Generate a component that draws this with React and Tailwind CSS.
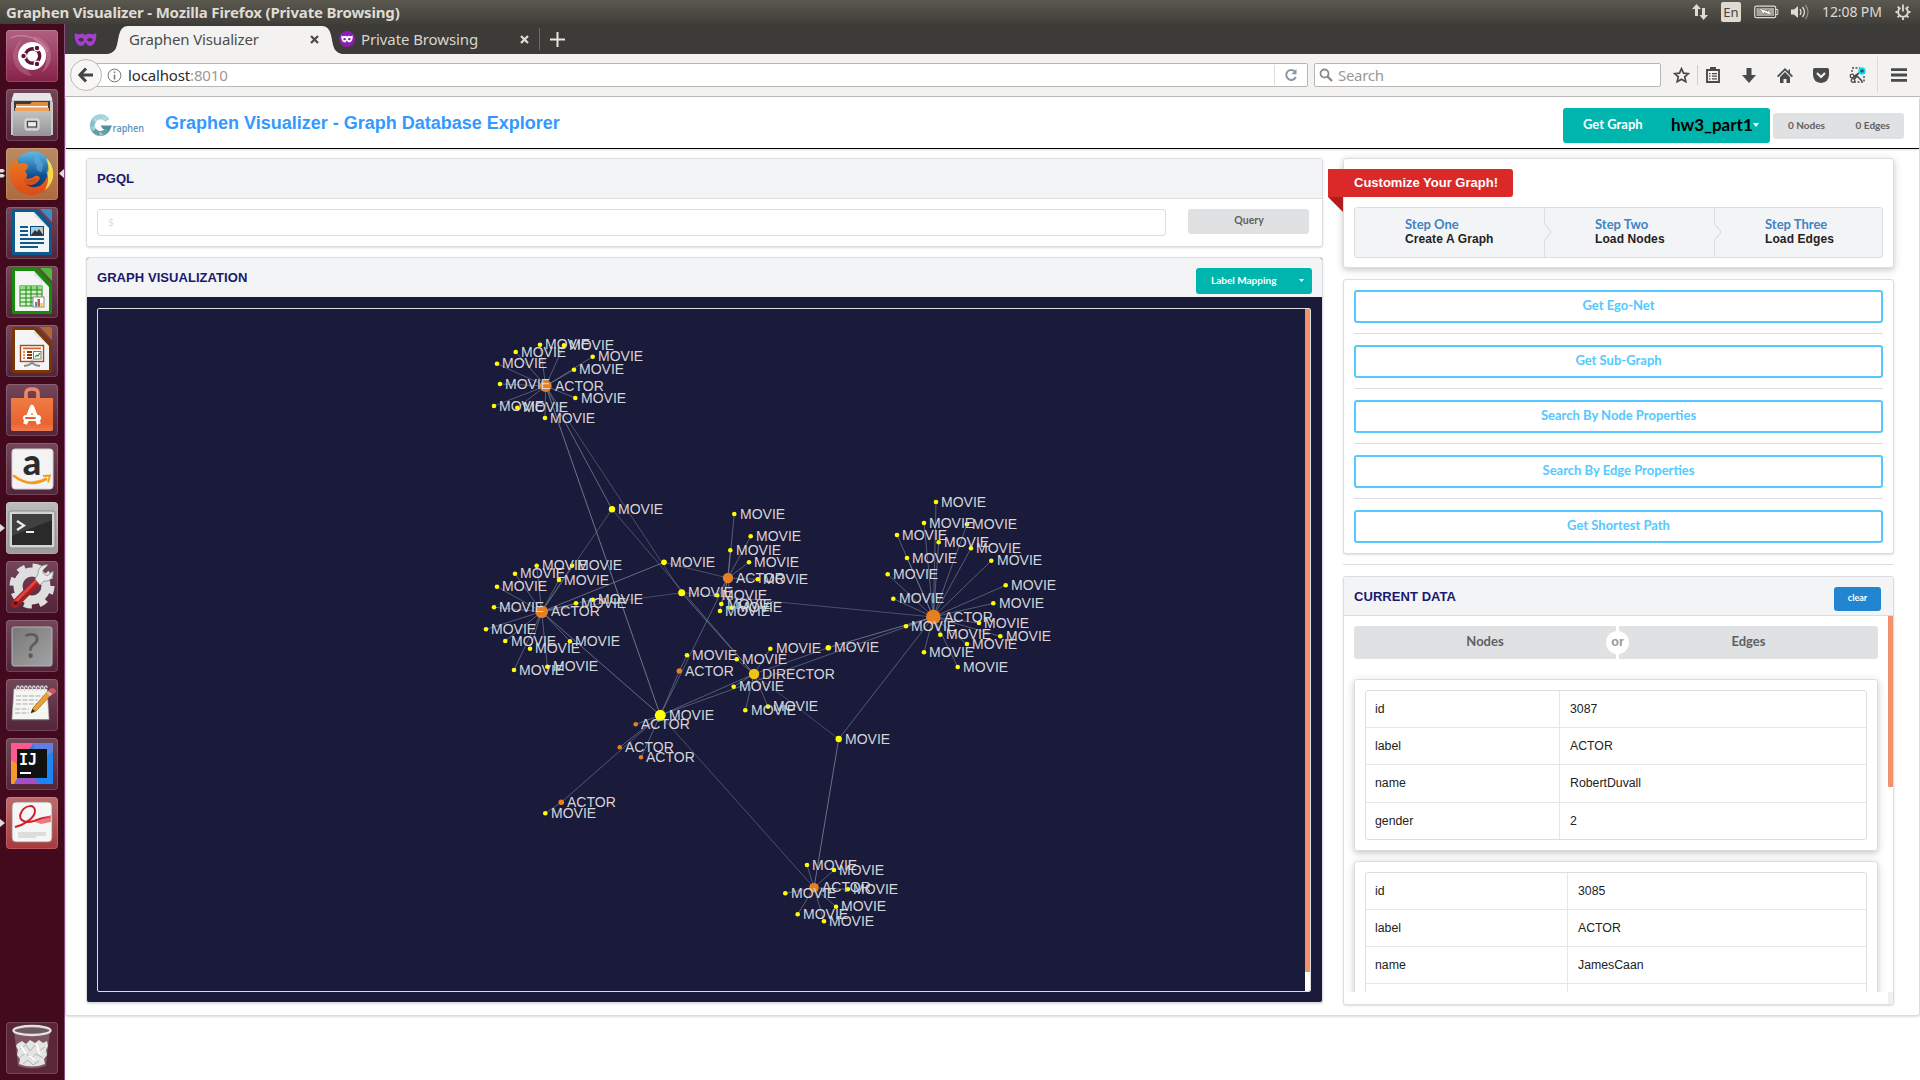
import React from "react";

const UI = "font-['Noto_Sans',sans-serif]";
const HELV = "font-['Liberation_Sans',Arial,sans-serif]";
const LATO = "font-['Lato',sans-serif]";

/* ---------- graph data: [x, y, radius, type] ---------- */
const hubs = {
  a1: [545.7, 386, 6, "ACTOR"],
  a2: [541.7, 611.7, 6.3, "ACTOR"],
  a3: [728, 578, 5.2, "ACTOR"],
  a4: [679.3, 671, 2.8, "ACTOR"],
  a5: [933.3, 617, 7.3, "ACTOR"],
  a6: [814, 887.7, 4.8, "ACTOR"],
  a7: [561.3, 802.3, 2.8, "ACTOR"],
  d: [754, 674, 5.2, "DIRECTOR"],
  m1: [612, 509.3, 3.2, "MOVIE"],
  m2: [664, 562.3, 2.8, "MOVIE"],
  m3: [681.7, 592.7, 3.5, "MOVIE"],
  m5: [828.3, 647.7, 2.8, "MOVIE"],
  m6: [838.7, 739, 3.2, "MOVIE"],
  m7: [660.3, 715.3, 5.5, "MOVIE"],
};

const leaves = {
  a1: [[540, 344.7], [564, 345.3], [515.7, 352], [497, 363.7], [500, 384], [494, 406], [517.3, 407.7], [545, 418], [575.3, 398], [574, 369.7], [592.7, 356.7]],
  a2: [[536.7, 565.7], [572, 565.7], [515, 573.7], [497, 586.7], [559, 580], [494, 607.3], [576, 603.3], [592.7, 599.7], [486, 629.3], [505.3, 641], [530, 648.7], [570, 641.3], [514, 670], [547.3, 666.7]],
  a3: [[734.3, 514], [750.7, 536.3], [730.3, 550.3], [749, 562.3], [757.7, 579.3], [717, 595.3], [721.3, 604], [731.3, 607.7], [720, 611]],
  a4: [[687, 655.3]],
  a5: [[936, 502], [924, 523], [967, 524.3], [897, 535], [938.7, 542.3], [971, 548.3], [907, 558], [991.3, 560.7], [887.7, 574.3], [1005.7, 585.3], [893.3, 598.7], [993.3, 603.3], [906, 626.3], [979, 623], [940.3, 634.7], [1000.3, 636.3], [967, 644], [924, 652.3], [957.7, 667]],
  a6: [[807, 865], [834, 870], [785.3, 893.3], [848, 889.3], [836, 906.7], [797.7, 914.3], [824, 921.3]],
  a7: [[545.3, 813.3]],
  d: [[736.7, 659.3], [770.3, 648.7], [733.7, 686.7], [745.3, 710.3], [768, 706.6]],
  m7: [[635.7, 724.3], [619.7, 747.3], [641, 757.3]],
};

const links = [
  ["a1", "m1", 0.75], ["a1", "m3", 0.5], ["a1", "m7", 0.85], ["m1", "a2", 0.5], ["m1", "d", 0.5],
  ["a2", "m2", 0.75], ["m2", "a3", 0.5], ["a2", "m3", 0.45], ["m3", "a5", 0.5], ["m3", "d", 0.75],
  ["a3", "m7", 0.6], ["a4", "m7", 0.6], ["d", "m7", 0.6], ["a5", "m7", 0.6], ["d", "m5", 0.6],
  ["m5", "a5", 0.8], ["d", "m6", 0.45], ["m6", "a5", 0.6], ["m6", "a6", 0.8], ["a2", "m7", 0.75],
  ["m7", "a6", 0.5], ["m7", "a7", 0.6],
];

const fills = { ACTOR: "#e67e22", DIRECTOR: "#f1c40f", MOVIE: "#ffff00" };

function GraphCanvas() {
  const nodes = Object.values(hubs).slice();
  const edges = links.map(([a, b, o]) => [hubs[a], hubs[b], o]);
  Object.entries(leaves).forEach(([hub, list]) => {
    list.forEach(([x, y]) => {
      const n = [x, y, 2.3, hub === "m7" ? "ACTOR" : "MOVIE"];
      nodes.push(n);
      edges.push([hubs[hub], n, 0.62]);
    });
  });
  return (
    <svg className="block h-full flex-1" viewBox="98 309 1207 683" preserveAspectRatio="xMinYMin slice">
      {edges.map(([a, b, o], i) => (
        <line key={i} x1={a[0]} y1={a[1]} x2={b[0]} y2={b[1]} stroke="#8494a3" strokeOpacity={o} strokeWidth="0.9" />
      ))}
      {nodes.map(([x, y, r, t], i) => (
        <circle key={i} cx={x} cy={y} r={r} fill={fills[t]} />
      ))}
      {nodes.map(([x, y, r, t], i) => (
        <text key={i} x={Math.round(x + r + 3)} y={Math.round(y + 4.7)} fontSize="14" fontFamily="Liberation Sans, Arial, sans-serif" fill="#d6d6da">
          {t}
        </text>
      ))}
    </svg>
  );
}

/* ---------- launcher ---------- */
const docIcon = (dark, light, body) => (
  <>
    <path d="M8 2h23l15 16v28q0 2-2 2H8q-2 0-2-2V4q0-2 2-2z" fill={dark} />
    <path d="M34 2h10q2 0 2 2v11z" fill={light} />
    <path d="M9 5h19l15 16v24H9z" fill="#f4f4f4" />
    <path d="M28 5l15 16-15-12z" fill="#cfcfcf" opacity=".5" />
    {body}
  </>
);

const icons = {
  dash: (
    <>
      <path d="M26 6a20 20 0 0 1 19 20c0 8-5 14-10 17 6-8 6-14 5-18" fill="#c77d99" opacity=".55" />
      <path d="M26 46A20 20 0 0 1 7 26C7 18 12 12 17 9c-6 8-6 14-5 18" fill="#c77d99" opacity=".4" />
      <path d="M4 8c14-6 30 0 38 14" stroke="#d795ad" strokeWidth="1.2" fill="none" opacity=".7" />
      <circle cx="26" cy="26" r="14" fill="#fff" />
      <circle cx="26.500" cy="26" r="7.200" fill="none" stroke="#5e1434" strokeWidth="3.400" />
      <g stroke="#fff" strokeWidth="1.200" fill="#5e1434">
        <circle cx="17.500" cy="26" r="2.800" /><circle cx="31" cy="18" r="2.800" /><circle cx="31" cy="34" r="2.800" />
      </g>
    </>
  ),
  files: (
    <>
      <path d="M8 4h36l3 10v32H5V14z" fill="#c9c9c9" />
      <path d="M8 4h36l2.500 7h-41z" fill="#e6e6e6" />
      <path d="M8 12h36v12H8z" fill="#3c3c3c" />
      <path d="M10 15h14l2-2h16v10H10z" fill="#e58a3e" />
      <path d="M10 17h32v1.500H10z" fill="#fff" />
      <path d="M9 19h34v5H9z" fill="#f0a057" />
      <path d="M7 22h38v25H7z" fill="url(#steel)" />
      <rect x="19" y="30" width="14" height="11" rx="2" fill="#c8c8c8" stroke="#e2e2e2" />
      <rect x="21.500" y="32.500" width="9" height="5.500" fill="#eee" stroke="#444" strokeWidth="1.200" />
    </>
  ),
  firefox: (
    <>
      <circle cx="27" cy="24" r="20.500" fill="url(#globe)" />
      <path d="M30 8c5 2 4 6 8 8-3 3 0 6-3 8-4-1-6-4-4-7-3-2-4-5-1-9z" fill="#67b5e3" opacity=".5" />
      <path d="M43 14c4 5 6 12 3 19-4 9-12 14-20 14C14 47 5 38 4 27c-.5-6 1-11 3-15l1 4 2-7 3 7c5-2 9-1 9 3 0 2-3 3-3 5 2 1 3 4 1 6 2 2 6 0 9-2 4-1 6 2 4 4-3 5-9 6-13 4 5 5 14 4 18-2 4-5 4-9 3-13l2 2c1-4 0-6 0-9z" fill="url(#fox)" />
      <path d="M40 10c7 5 9 15 6 23-2 4-4 7-7 9 4-8 4-14 1-19l2 2c1-5 0-10-2-15z" fill="#fbd84e" />
      <path d="M18 30c3 4 8 1 11 0 3 0 3 2 2 3-3 3-8 4-12 2z" fill="#c9471b" opacity=".55" />
    </>
  ),
  writer: docIcon("#0d5a8e", "#3b8fc4", (
    <>
      <g fill="#0d5a8e">
        <rect x="14" y="19" width="8" height="2" /><rect x="14" y="23" width="8" height="2" /><rect x="14" y="27" width="8" height="2" />
        <rect x="14" y="31" width="24" height="2" /><rect x="14" y="35" width="24" height="2" /><rect x="14" y="39" width="18" height="2" />
      </g>
      <rect x="24.500" y="19.500" width="13" height="9" fill="#9dccec" stroke="#0d4a75" />
      <path d="M25 28l4-5 2 2 2-3 4 6z" fill="#333" /><circle cx="35" cy="22" r="1.300" fill="#f6c644" />
    </>
  )),
  calc: docIcon("#1a8a0c", "#4dbb36", (
    <>
      <rect x="14" y="20" width="22" height="20" fill="#d5f0cf" stroke="#1a8a0c" />
      <rect x="14" y="20" width="22" height="4" fill="#8fdb83" />
      <path d="M14 24h22M14 28h22M14 32h22M14 36h22M20 20v20M25 20v20M31 20v20" stroke="#1a8a0c" fill="none" />
      <rect x="27" y="31" width="11" height="10" fill="#fff" stroke="#8a8a8a" />
      <rect x="29" y="36" width="2" height="4.500" fill="#3c8fd6" /><rect x="31.500" y="33" width="2.500" height="7.500" fill="#d9541e" /><rect x="34.500" y="37" width="2" height="3.500" fill="#f2c500" />
    </>
  )),
  impress: docIcon("#7a3607", "#b4662c", (
    <>
      <rect x="14.500" y="20.500" width="23" height="16" fill="#fff" stroke="#a8481a" strokeWidth="1.400" />
      <rect x="17" y="22.500" width="18" height="1.800" fill="#d9662a" />
      <path d="M17 27h2M17 30h2M17 33h2" stroke="#d9662a" strokeWidth="1.600" /><path d="M21 27h5M21 30h5M21 33h5" stroke="#8a3608" strokeWidth="1.800" />
      <rect x="27.500" y="26.500" width="7.500" height="7.500" fill="#fff" stroke="#777" /><path d="M29 32l2-2 1 1 2-3" stroke="#2e9a2e" fill="none" strokeWidth="1.200" />
      <path d="M18 41q7-1 8-4 1 3 8 4" stroke="#8b8b8b" strokeWidth="2" fill="none" />
    </>
  )),
  software: (
    <>
      <path d="M20 16V9q0-4 6-4t6 4v7" fill="none" stroke="#e98a66" strokeWidth="3.600" />
      <path d="M5 14h42v31q0 2-2 2H7q-2 0-2-2z" fill="url(#bag)" />
      <path d="M19 40l7-17 7 17" fill="none" stroke="#fff" strokeWidth="4.200" strokeLinejoin="round" />
      <rect x="17" y="31" width="18" height="6" rx="3" fill="#fff" /><rect x="19" y="33" width="11" height="2" rx="1" fill="#e9622c" />
    </>
  ),
  amazon: (
    <>
      <rect x="6" y="6" width="41" height="40" rx="3" fill="#f3f3f3" stroke="#d0d0d0" />
      <text x="26" y="32" textAnchor="middle" fontFamily="Lato, sans-serif" fontWeight="900" fontSize="36" fill="#2c2c2c">a</text>
      <path d="M8 33q16 12 32 3" stroke="#f79a1b" strokeWidth="2.800" fill="none" strokeLinecap="round" /><path d="M37 33l7-.5-2 7" fill="none" stroke="#f79a1b" strokeWidth="1.800" />
    </>
  ),
  terminal: (
    <>
      <rect x="3" y="9" width="46" height="37" rx="2" fill="#d4d4d4" stroke="#8b8b8b" />
      <rect x="6" y="12" width="40" height="31" fill="#2a2a2a" />
      <path d="M6 12h40v6L6 34z" fill="#4a4a4a" opacity=".7" />
      <path d="M11 19l7 4.500-7 4.500" stroke="#eee" strokeWidth="2.200" fill="none" /><path d="M20 30h8" stroke="#eee" strokeWidth="2" />
    </>
  ),
  settings: (
    <>
      <circle cx="26" cy="25" r="14" fill="none" stroke="#dedede" strokeWidth="9" />
      <circle cx="26" cy="25" r="20" fill="none" stroke="#dedede" strokeWidth="5" strokeDasharray="8 7.700" />
      <path d="M9 43L35 17" stroke="#a81d1d" strokeWidth="8" strokeLinecap="round" />
      <path d="M9 41L32 18" stroke="#dd4646" strokeWidth="3" strokeLinecap="round" />
      <path d="M29 18l5 6 4-4c6 1 10-4 9-10l-6 5-4-3 0-3 5-5c-6-1-10 3-10 9z" fill="#e8e8e8" stroke="#8c8c8c" strokeWidth=".8" />
      <circle cx="9.500" cy="42" r="2" fill="#5e0a0a" />
    </>
  ),
  help: (
    <>
      <rect x="6" y="7" width="40" height="39" rx="2" fill="url(#steel2)" stroke="#b5b5b5" />
      <text x="26" y="38" textAnchor="middle" fontFamily="Noto Sans, sans-serif" fontSize="34" fill="#5c5c5c">?</text>
    </>
  ),
  editor: (
    <>
      <path d="M8 10h33l2 31H6z" fill="#f5f5f2" stroke="#bbb" strokeWidth=".6" />
      <path d="M5 40h38v2H5z" fill="#333" opacity=".5" />
      {[11, 15, 19, 23, 27, 31, 35, 39].map((x) => <path key={x} d={`M${x} 12c-2-5 2-7 2-3`} stroke="#d8d8d8" strokeWidth="1.300" fill="none" />)}
      <path d="M10 17h27M10 21h22M10 25h25M9 30h14M9 34h14" stroke="#a9a9a9" strokeDasharray="5 1.500" />
      <path d="M25 34l2-5 15-17 4 3-16 17z" fill="#eba133" stroke="#8a5a17" strokeWidth=".7" />
      <path d="M25 34l1.500-4 2.500 2z" fill="#222" /><path d="M42 12l3-3q5 0 5 4l-4 3z" fill="#d5565c" />
      <path d="M40.500 14l1.500-2 4 3-1.500 2z" fill="#ccc" />
    </>
  ),
  idea: (
    <>
      <rect x="5" y="5" width="42" height="41" fill="#1a86f5" />
      <path d="M5 5h23L5 32z" fill="#fc5a8c" /><path d="M28 5h19v9L28 24z" fill="#5f7fe0" /><path d="M5 22l12 8-9 16H5z" fill="#f39a2e" /><path d="M9 46l10-16 15 16z" fill="#a250c4" />
      <rect x="11" y="11" width="30" height="29" fill="#111" />
      <text x="13" y="27" fontFamily="DejaVu Sans Mono, monospace" fontWeight="700" fontSize="15" fill="#fff">IJ</text>
      <rect x="14" y="34" width="11" height="2" fill="#fff" />
    </>
  ),
  reader: (
    <>
      <rect x="6" y="5" width="40" height="40" rx="4" fill="#f6f6f6" stroke="#888" strokeWidth=".8" />
      <path d="M9 30c9-2 20-9 20-16 0-7-9-6-13 0-5 8 1 13 12 10 6-2 10-4 16-4" fill="none" stroke="#d31f2c" strokeWidth="2" />
      <path d="M29 25l16-7v7l-10 2z" fill="#e0525a" opacity=".75" />
      <path d="M12 36h28M12 38h28M12 40h18" stroke="#b9b9b9" strokeWidth=".8" />
    </>
  ),
  trash: (
    <>
      <path d="M8 8h36l-4 36q-14 5-28 0z" fill="#fff" opacity=".22" />
      <path d="M11 22l5-3 4 3 4-4 5 3 4-3 4 3 4-2 1 5-2 4 1 5-3 4 1 5q-13 5-26 0l1-5-3-4 1-5-2-4z" fill="#e4e4e2" />
      <path d="M14 27l6-4 4 6 5-6 4 6 6-4M14 35l6-4 5 6 5-5 7 4M17 42l5-4 5 5 6-4" stroke="#b4b4b2" fill="none" />
      <path d="M15 24l5 8M30 22l4 10M23 34l6 4" stroke="#fff" strokeWidth="2" fill="none" />
      <ellipse cx="26" cy="8.500" rx="18.500" ry="4.500" fill="#6d5a62" stroke="#e2e2e2" strokeWidth="2.400" />
    </>
  ),
};

const PLAIN = "bg-gradient-to-b from-[#734659] to-[#54243a]";

const tiles = [
  ["dash", "bg-gradient-to-b from-[#b06082] to-[#862048]"],
  ["files", PLAIN],
  ["firefox", "bg-gradient-to-b from-[#bd8a63] to-[#ad6b3d]", "active"],
  ["writer", PLAIN],
  ["calc", PLAIN],
  ["impress", PLAIN],
  ["software", PLAIN],
  ["amazon", PLAIN],
  ["terminal", "bg-gradient-to-b from-[#bcbcbc] to-[#9a9a9a]", "run"],
  ["settings", PLAIN],
  ["help", PLAIN],
  ["editor", PLAIN],
  ["idea", PLAIN],
  ["reader", "bg-gradient-to-b from-[#c06a6a] to-[#a8383c]", "run"],
];

function Tile({ name, tone, state, className = "" }) {
  return (
    <div className={`relative h-[52px] w-[52px] shrink-0 rounded-[4px] shadow-[inset_0_0_0_1px_rgba(255,255,255,0.16)] ${tone} ${className}`}>
      <svg viewBox="0 0 52 52" className="block h-[52px] w-[52px]">{icons[name]}</svg>
      {state === "run" && <svg className="absolute -left-[6px] top-[22px]" width="5" height="8"><path d="M0 0l5 4-5 4z" fill="#ddd" /></svg>}
      {state === "active" && (
        <>
          <svg className="absolute -left-[6px] top-[21px]" width="5" height="9"><path d="M0 0h3l2 1.700-2 1.700H0zM0 5h3l2 1.700L3 8.400H0z" fill="#ddd" /></svg>
          <svg className="absolute left-[53px] top-[21px]" width="5" height="9"><path d="M5 0v9L0 4.500z" fill="#ddd" /></svg>
        </>
      )}
    </div>
  );
}

function Launcher() {
  return (
    <aside className="flex h-full w-[65px] shrink-0 flex-col gap-[7px] border-r border-[#8c4a80] bg-[#430a1e] pt-[6px] pb-[6px] pl-[6px]">
      <svg width="0" height="0" className="absolute">
        <defs>
          <linearGradient id="steel" x2="0" y2="1"><stop stopColor="#c2c2c2" /><stop offset="1" stopColor="#949494" /></linearGradient>
          <linearGradient id="steel2" x2="1" y2="1"><stop stopColor="#787878" /><stop offset="1" stopColor="#a3a3a3" /></linearGradient>
          <linearGradient id="globe" x2="0" y2="1"><stop stopColor="#5fbbe8" /><stop offset=".6" stopColor="#0e4d90" /><stop offset="1" stopColor="#0a2f66" /></linearGradient>
          <linearGradient id="fox" x2="0" y2="1"><stop stopColor="#ee7d22" /><stop offset="1" stopColor="#dd4a18" /></linearGradient>
          <linearGradient id="bag" x2="0" y2="1"><stop stopColor="#ef7b43" /><stop offset=".75" stopColor="#ea6430" /><stop offset="1" stopColor="#f07a50" /></linearGradient>
        </defs>
      </svg>
      {tiles.map(([n, t, s]) => <Tile key={n} name={n} tone={t} state={s} />)}
      <Tile name="trash" tone="bg-[#5a2638]" className="mt-auto" />
    </aside>
  );
}

/* ---------- desktop top bar ---------- */
function TopBar() {
  return (
    <div className={`flex h-6 shrink-0 items-center bg-gradient-to-b from-[#5b594f] to-[#3f3e39] text-[#dfdbd2] ${UI}`}>
      <span className="ml-[6px] w-[420px] whitespace-nowrap text-[15px] font-bold leading-6 tracking-[-0.17px]">Graphen Visualizer - Mozilla Firefox (Private Browsing)</span>
      <svg className="ml-auto" width="18" height="18" viewBox="0 0 18 18" fill="#dfdbd2"><path d="M5.500 1L10 6H7v7H4V6H1zM12.500 17L8.500 12H11V5h3v7h3z" /></svg>
      <span className="ml-[12px] h-5 w-5 rounded-[2px] bg-[#dfdbd2] text-center text-[13px] leading-5 text-[#45443f]">En</span>
      <svg className="ml-[13px]" width="25" height="14" viewBox="0 0 25 14"><rect x=".7" y="1.200" width="21" height="11.500" rx="1.500" fill="none" stroke="#dfdbd2" strokeWidth="1.200" /><rect x="2.500" y="3" width="17.500" height="8" fill="#a9a69d" /><path d="M22 4.500h1.800v5H22" fill="none" stroke="#dfdbd2" /><path d="M5 3l9 3.500V4l4 6.500-8-3V10z" fill="#fff" stroke="#55534c" strokeWidth=".5" /></svg>
      <svg className="ml-[11px]" width="20" height="16" viewBox="0 0 20 16" fill="none" stroke="#dfdbd2"><path d="M1 5.500h3L8 2v12l-4-3.500H1z" fill="#dfdbd2" stroke="none" /><path d="M10 5q2 3 0 6" strokeWidth="1.300" /><path d="M12.500 3q4 5 0 10" strokeWidth="1.300" /><path d="M15.500 1q5 7 0 14" opacity=".45" strokeWidth="1.300" /></svg>
      <span className="ml-[12px] w-[61px] whitespace-nowrap text-[14px] leading-6 tracking-[-0.1px]">12:08 PM</span>
      <svg className="ml-[12px] mr-[9px]" width="16" height="16" viewBox="0 0 16 16" fill="none" stroke="#dfdbd2"><path d="M5.500 3.800a4.900 4.900 0 1 0 5 0" strokeWidth="1.800" /><path d="M8 .5v7" strokeWidth="1.800" /><path d="M2.600 2.600l1.600 1.600M13.400 2.600l-1.600 1.600M.5 8h2M15.500 8h-2M2.600 13.400l1.600-1.600M13.400 13.400l-1.600-1.600M8 13.500V16" strokeWidth="1.900" /></svg>
    </div>
  );
}

const Mask = ({ w, h, fill, eye }) => (
  <svg width={w} height={h} viewBox="0 0 24 16"><path d="M.5 1Q4 3 7 2q3-1 5 1.500Q14 1 17 2q3 1 6.500-1 .5 7-2.500 11.500-2 2.500-5 2.300Q13.500 14.500 12 11q-1.500 3.500-4 3.800-3 .2-5-2.300Q0 8 .5 1z" fill={fill} /><path d="M4 8q4-4 6.500.5Q7 12.500 4 8zM20 8q-4-4-6.500.5Q17 12.500 20 8z" fill={eye} /></svg>
);

const Close = ({ color, className }) => (
  <svg width="9" height="9" viewBox="0 0 9 9" className={className}><path d="M1 1l7 7M8 1L1 8" stroke={color} strokeWidth="2.300" /></svg>
);

function TabStrip() {
  return (
    <div className={`flex h-[30px] shrink-0 items-center bg-[#3c3b37] text-[15px] ${UI}`}>
      <div className="ml-[9px] w-[34px]"><Mask w={23} h={15} fill="#a43fd0" eye="#3c3b37" /></div>
      <svg width="20" height="28" viewBox="0 0 20 28" className="mt-[2px] shrink-0"><path d="M0 28q7-1 9-9l2-10q2-9 9-9v28z" fill="#f3f2f0" /></svg>
      <div className="mt-[2px] flex h-7 w-[194px] items-center bg-[#f3f2f0] text-[#4c4c4c]">
        <span className="-mt-[2px] ml-[1px] w-[181px] whitespace-nowrap tracking-[-0.15px]">Graphen Visualizer</span>
        <Close color="#4c4c4c" className="-mt-[1px]" />
      </div>
      <svg width="20" height="28" viewBox="0 0 20 28" className="mt-[2px] shrink-0"><path d="M20 28q-7-1-9-9L9 9Q7 0 0 0v28z" fill="#f3f2f0" /></svg>
      <div className="-ml-[3px] flex h-4 w-4 items-center justify-center rounded-full bg-[#8c1fb0]"><Mask w={12} h={8} fill="#fff" eye="#8c1fb0" /></div>
      <span className="ml-[6px] w-[159px] whitespace-nowrap tracking-[-0.1px] text-[#d9d5cc]">Private Browsing</span>
      <Close color="#dfdbd2" />
      <div className="ml-[10px] h-[22px] w-px bg-[#6b6a66]" />
      <svg width="15" height="15" className="ml-[10px]"><path d="M7.500 0v15M0 7.500h15" stroke="#e9e6df" strokeWidth="2" /></svg>
    </div>
  );
}

function NavBar() {
  return (
    <div className={`flex h-[43px] shrink-0 items-center border-b border-[#bcbab7] bg-[#f3f2f0] text-[15px] ${UI}`}>
      <div className="z-10 ml-[5px] flex h-8 w-8 items-center justify-center rounded-full border border-[#bdbbb8] bg-[#f8f7f6]">
        <svg width="16" height="16" viewBox="0 0 16 16"><path d="M8 1.500L1.800 8 8 14.500M2.500 8H15" fill="none" stroke="#444" strokeWidth="3" /></svg>
      </div>
      <div className="-ml-[6px] flex h-6 w-[1212px] items-center rounded-r-[2px] border border-[#b9b7b4] bg-white">
        <svg width="15" height="15" viewBox="0 0 15 15" className="ml-[10px]" fill="none" stroke="#777"><circle cx="7.500" cy="7.500" r="6.400" /><path d="M7.500 6.500v5M7.500 3.500V5" strokeWidth="1.500" /></svg>
        <span className="ml-[6px] tracking-[-0.15px] text-[#2b2b2b]">localhost<span className="text-[#999]">:8010</span></span>
        <div className="ml-auto mr-[9px] h-5 w-px bg-[#ddd]" />
        <svg width="14" height="14" viewBox="0 0 14 14" className="mr-[9px]"><path d="M11 3.600A5 5 0 1 0 11.800 9" fill="none" stroke="#8b97a5" strokeWidth="2" /><path d="M12.500 1v5.200H7.300z" fill="#8b97a5" /></svg>
      </div>
      <div className="ml-[6px] flex h-6 w-[347px] items-center rounded-[2px] border border-[#b9b7b4] bg-white">
        <svg width="14" height="14" viewBox="0 0 14 14" className="ml-[4px]" fill="none" stroke="#8a8a8a"><circle cx="5.500" cy="5.500" r="4" strokeWidth="1.800" /><path d="M8.500 8.500L13 13" strokeWidth="2.400" /></svg>
        <span className="ml-[5px] tracking-[-0.3px] text-[#999]">Search</span>
      </div>
      <svg width="17" height="16" viewBox="0 0 17 16" className="ml-[12px]"><path d="M8.500 1.600l2 4.500 4.900.5-3.700 3.300 1.100 4.800-4.300-2.500-4.300 2.500 1.100-4.800L1.600 6.600l4.900-.5z" fill="none" stroke="#4a4a4a" strokeWidth="1.700" /></svg>
      <div className="ml-[7px] h-5 w-px bg-[#d0cecb]" />
      <svg width="14" height="16" viewBox="0 0 14 16" className="ml-[8px]"><path d="M1 3h12v12H1z" fill="none" stroke="#4a4a4a" strokeWidth="1.900" /><path d="M4 0h6v4H4z" fill="#4a4a4a" /><path d="M3 6.700h1.500M3 9.200h1.500M3 11.800h1.500M6 6.700h5M6 9.200h5M6 11.800h5" stroke="#4a4a4a" strokeWidth="1.300" /></svg>
      <svg width="14" height="15" viewBox="0 0 14 15" className="ml-[22px]"><path d="M4.500 0h5v7H14l-7 8-7-8h4.500z" fill="#4a4a4a" /></svg>
      <svg width="16" height="15" viewBox="0 0 16 15" className="ml-[21px]"><path d="M0 8l8-8 3.500 3.500V1.500H13v3.600L16 8l-1.300 1.200L8 2.600 1.300 9.200z" fill="#4a4a4a" /><path d="M3 9l5-5 5 5v6h-3.500v-4h-3v4H3z" fill="#4a4a4a" /></svg>
      <svg width="16" height="15" viewBox="0 0 16 15" className="ml-[20px]"><path d="M1.500 0h13q1.500 0 1.500 1.500V7q-.5 7.500-8 8Q.5 14.500 0 7V1.500Q0 0 1.500 0z" fill="#4a4a4a" /><path d="M4 5l4 4 4-4" stroke="#f3f2f0" strokeWidth="2.200" fill="none" /></svg>
      <svg width="17" height="16" viewBox="0 0 17 16" className="ml-[20px]" fill="none" stroke="#4a4a4a"><path d="M3 1h8M3 3v3M15 9v6M5 15h10" strokeDasharray="2 1.500" strokeWidth="1.400" /><circle cx="3" cy="9" r="1.800" strokeWidth="1.300" /><circle cx="4" cy="13.500" r="1.800" strokeWidth="1.300" /><path d="M4.500 10l7-5M5 12.500L8 9l5 5" strokeWidth="1.700" /><circle cx="13" cy="4" r="3.800" fill="#15e3ee" stroke="none" /><path d="M13 2v4M11.200 3l3.600 2M14.800 3l-3.600 2" stroke="#235" strokeWidth=".9" /></svg>
      <div className="ml-[11px] h-[36px] w-px bg-[#dddbd8]" />
      <svg width="16" height="14" className="ml-[13px]"><path d="M0 1.700h16M0 7h16M0 12.300h16" stroke="#4a4a4a" strokeWidth="2.800" /></svg>
    </div>
  );
}

/* ---------- page ---------- */
function Header() {
  return (
    <header className="flex h-[51px] shrink-0 items-start border-b border-black pl-[24px] pr-[15px] shadow-[0_1px_2px_rgba(34,36,38,0.15)]">
      <div className="relative mt-[17px] h-[24px] w-[75px]">
        <svg width="60" height="24" viewBox="0 0 60 24" overflow="visible">
          <path d="M3.300 6.500A8 8 0 0 1 17.300 5.500" fill="none" stroke="#a3d3d6" strokeWidth="5" />
          <path d="M4 5.500A8 8 0 0 0 4.500 16" fill="none" stroke="#86bfc6" strokeWidth="5" />
          <path d="M4 15.300A8 8 0 0 0 17 15" fill="none" stroke="#659ea8" strokeWidth="5" />
          <path d="M10.500 10.500h11.500l-3 6.500-3.500-3h-2.500z" fill="#54909b" />
          <path d="M5 3l3 3-5 1zM12 1l2 5 3-3zM1 12l5-1-2 5zM9 21l1-5 4 4z" fill="#c4e4e5" opacity=".55" />
          <text x="22.500" y="16.500" fontSize="10.500" fontFamily="Open Sans, sans-serif" fontWeight="600" fill="#5c93c0" textLength="31.500" lengthAdjust="spacingAndGlyphs">raphen</text>
        </svg>
      </div>
      <h1 className={`mt-[13px] whitespace-nowrap text-[18px] font-bold leading-6 text-[#3399ff] ${HELV}`}>Graphen Visualizer - Graph Database Explorer</h1>
      <div className={`ml-auto mt-[10px] flex h-[35px] w-[207px] items-center rounded-[3px] bg-[#00b5ad] font-bold ${LATO}`}>
        <span className="-mt-[2px] ml-[20px] w-[88px] whitespace-nowrap text-[13px] text-white">Get Graph</span>
        <span className="-mt-[2px] w-[82px] whitespace-nowrap text-[17px] text-black">hw3_part1</span>
        <svg width="6" height="4" className="-mt-[2px]"><path d="M0 0h6L3 4z" fill="#fff" /></svg>
      </div>
      <div className={`ml-[3px] mt-[15px] flex h-[26px] w-[131px] items-center justify-between rounded-[3px] bg-[#e0e1e2] pb-px pl-[15px] pr-[14px] text-[10px] font-bold text-[#5f6061] ${LATO}`}>
        <span>0 Nodes</span><span>0 Edges</span>
      </div>
    </header>
  );
}

const PanelTitle = ({ children }) => (
  <h2 className={`whitespace-nowrap text-[13px] font-bold tracking-[0.06px] text-[#191970] ${HELV}`}>{children}</h2>
);

function LeftColumn() {
  return (
    <div className="flex w-[1237px] flex-col gap-[10px]">
      <section className="h-[89px] rounded-[3px] border border-[#dcdddf] bg-white shadow-[0_1px_2px_rgba(34,36,38,0.15)]">
        <div className="flex h-[40px] items-center border-b border-[#dcdddf] bg-[#f3f4f5] pl-[10px]"><PanelTitle>PGQL</PanelTitle></div>
        <div className="flex pl-[10px] pt-[10px]">
          <div className={`h-[27px] w-[1069px] rounded-[3px] border border-[#dcdddf] pl-[10px] text-[10px] leading-[24px] text-[#dcdcdc] ${LATO}`}>$</div>
          <button className={`ml-[22px] h-[25px] w-[121px] rounded-[3px] bg-[#e0e1e2] pb-[2px] pl-[1px] text-[10.500px] font-bold text-[#5f6061] ${LATO}`}>Query</button>
        </div>
      </section>
      <section className="flex h-[746px] flex-col overflow-hidden rounded-[3px] border border-[#dcdddf] bg-[#1a1a3a] shadow-[0_1px_2px_rgba(34,36,38,0.15)]">
        <div className="flex h-[39px] shrink-0 items-start justify-between bg-[#f3f4f5] pl-[10px] pr-[10px]">
          <div className="pt-[10px]"><PanelTitle>GRAPH VISUALIZATION</PanelTitle></div>
          <div className={`mt-[10px] flex h-[26px] w-[116px] items-center rounded-[3px] bg-[#00b5ad] pb-px text-[10px] font-bold text-white ${LATO}`}>
            <span className="ml-[15px] w-[88px] whitespace-nowrap">Label Mapping</span>
            <svg width="5" height="3"><path d="M0 0h5L2.500 3z" fill="#fff" /></svg>
          </div>
        </div>
        <div className="mx-[10px] mb-[10px] mt-[11px] flex h-[685px] w-[1214px] overflow-hidden rounded-[2px] border border-[#dcdddf] bg-[#1a1a3a]">
          <GraphCanvas />
          <div className="h-full w-[5px] bg-white"><div className="h-[663px] bg-[#f2916b]" /></div>
        </div>
      </section>
    </div>
  );
}

const steps = [
  ["Step One", "Create A Graph", "w-[190px]"],
  ["Step Two", "Load Nodes", "w-[170px]"],
  ["Step Three", "Load Edges", "w-[167px]"],
];

function StepsCard() {
  return (
    <section className="relative h-[110px] rounded-[3px] border border-[#dcdddf] bg-white px-[10px] pt-[48px] shadow-[0_2px_4px_rgba(34,36,38,0.12),0_2px_10px_rgba(34,36,38,0.15)]">
      <div className={`absolute -left-[16px] top-[10px] h-[28px] w-[185px] rounded-r-[3px] bg-[#db2828] pl-[26px] text-[13px] font-bold leading-[27px] text-white whitespace-nowrap ${HELV}`}>Customize Your Graph!</div>
      <svg className="absolute -left-[16px] top-[38px]" width="15" height="15"><path d="M0 0h15v15z" fill="#b21e1e" /></svg>
      <div className="flex h-[51px] w-[529px] rounded-[3px] border border-[#dcdddf] bg-[#f3f4f5]">
        {steps.map(([a, b, w], i) => (
          <div key={a} className={`relative pt-[8px] ${w} ${i < 2 ? "border-r border-[#dcdddf]" : ""}`}>
            <div className="ml-[50px]">
              <div className={`whitespace-nowrap text-[13px] font-bold leading-[16px] text-[#4183c4] ${LATO}`}>{a}</div>
              <div className={`mt-px whitespace-nowrap text-[12px] font-bold leading-[13px] tracking-[0.1px] text-[#222] ${HELV}`}>{b}</div>
            </div>
            {i < 2 && <svg className="absolute -right-[8px] top-[15px]" width="9" height="18"><path d="M1 0l7 9-7 9z" fill="#f3f4f5" /><path d="M1 0l7 9-7 9" fill="none" stroke="#d4d4d5" /></svg>}
          </div>
        ))}
      </div>
    </section>
  );
}

const actions = ["Get Ego-Net", "Get Sub-Graph", "Search By Node Properties", "Search By Edge Properties", "Get Shortest Path"];

function Actions() {
  return (
    <section className="mt-[11px] h-[275px] rounded-[3px] border border-[#dcdddf] bg-white p-[10px] shadow-[0_1px_2px_rgba(34,36,38,0.15)]">
      {actions.map((a, i) => (
        <React.Fragment key={a}>
          {i > 0 && <div className="my-[10px] h-[2px] border-t border-[#dcdddf]" />}
          <button className={`block h-[33px] w-full rounded-[3px] border-2 border-[#54c8ff] pb-[1px] text-[13px] font-bold text-[#54c8ff] ${LATO}`}>{a}</button>
        </React.Fragment>
      ))}
    </section>
  );
}

function Record({ rows, split, className = "" }) {
  return (
    <div className={`h-[172px] w-[524px] shrink-0 rounded-[3px] border border-[#dcdddf] bg-white p-[10px] shadow-[0_2px_4px_rgba(34,36,38,0.12),0_2px_10px_rgba(34,36,38,0.15)] ${className}`}>
      <div className={`h-[150px] rounded-[3px] border border-[#dcdddf] text-[12.3px] text-[#222] ${HELV}`}>
        {rows.map(([k, v, h = "h-[37px]"], i) => (
          <div key={k} className={`flex ${h} ${i ? "border-t border-[#e6e6e7]" : ""}`}>
            <div className={`border-r border-[#e6e6e7] pl-[9px] leading-[36px] ${split}`}>{k}</div>
            <div className="pl-[10px] leading-[36px]">{v}</div>
          </div>
        ))}
      </div>
    </div>
  );
}

function CurrentData() {
  return (
    <section className="h-[429px] rounded-[3px] border border-[#dcdddf] bg-white shadow-[0_1px_2px_rgba(34,36,38,0.15)]">
      <div className="flex h-[39px] items-start justify-between border-b border-[#dcdddf] bg-[#f3f4f5] pl-[10px] pr-[12px]">
        <div className="pt-[10px]"><PanelTitle>CURRENT DATA</PanelTitle></div>
        <button className={`mt-[10px] h-[24px] w-[47px] rounded-[3px] bg-[#2185d0] pb-[2px] text-[9px] font-bold text-white ${LATO}`}>clear</button>
      </div>
      <div className="flex h-[376px] overflow-hidden">
        <div className="w-[544px] overflow-hidden pl-[10px] pt-[10px]">
          <div className={`relative flex h-[33px] w-[524px] gap-[3px] text-center text-[13px] font-bold leading-[31px] text-[#5f6061] ${LATO}`}>
            <div className="w-[262px] rounded-l-[3px] bg-[#e0e1e2]">Nodes</div>
            <div className="w-[259px] rounded-r-[3px] bg-[#e0e1e2]">Edges</div>
            <span className={`absolute left-[252px] top-[5px] h-[23px] w-[23px] rounded-full bg-white text-[12.500px] leading-[23px] text-[#999] ${HELV}`}>or</span>
          </div>
          <Record className="mt-[20px]" split="w-[194px]" rows={[["id", "3087", "h-[36px]"], ["label", "ACTOR"], ["name", "RobertDuvall", "h-[38px]"], ["gender", "2"]]} />
          <Record className="mt-[10px]" split="w-[202px]" rows={[["id", "3085", "h-[36px]"], ["label", "ACTOR"], ["name", "JamesCaan"], ["gender", "2"]]} />
        </div>
        <div className="h-[171px] w-[5px] rounded-b-[1px] bg-[#f2916b]" />
      </div>
      <div className="ml-auto h-[12px] w-[5px] bg-[#f1f0ef]" />
    </section>
  );
}

export default function App() {
  return (
    <div className="flex h-[1080px] w-[1920px] flex-col overflow-hidden bg-white">
      <TopBar />
      <div className="flex min-h-0 flex-1">
        <Launcher />
        <div className="flex min-w-0 flex-1 flex-col">
          <TabStrip />
          <NavBar />
          <main className="mt-px flex h-[918px] w-full flex-col rounded-b-[3px] border-x border-b border-[#dcdddf] bg-white shadow-[0_1px_2px_rgba(34,36,38,0.15)]">
            <Header />
            <div className="flex gap-[20px] pl-[20px] pt-[9px]">
              <LeftColumn />
              <div className="flex w-[551px] flex-col">
                <StepsCard />
                <Actions />
                <div className="mb-[11px] mt-[10px] border-t border-[#dcdddf]" />
                <CurrentData />
              </div>
            </div>
          </main>
        </div>
      </div>
    </div>
  );
}
